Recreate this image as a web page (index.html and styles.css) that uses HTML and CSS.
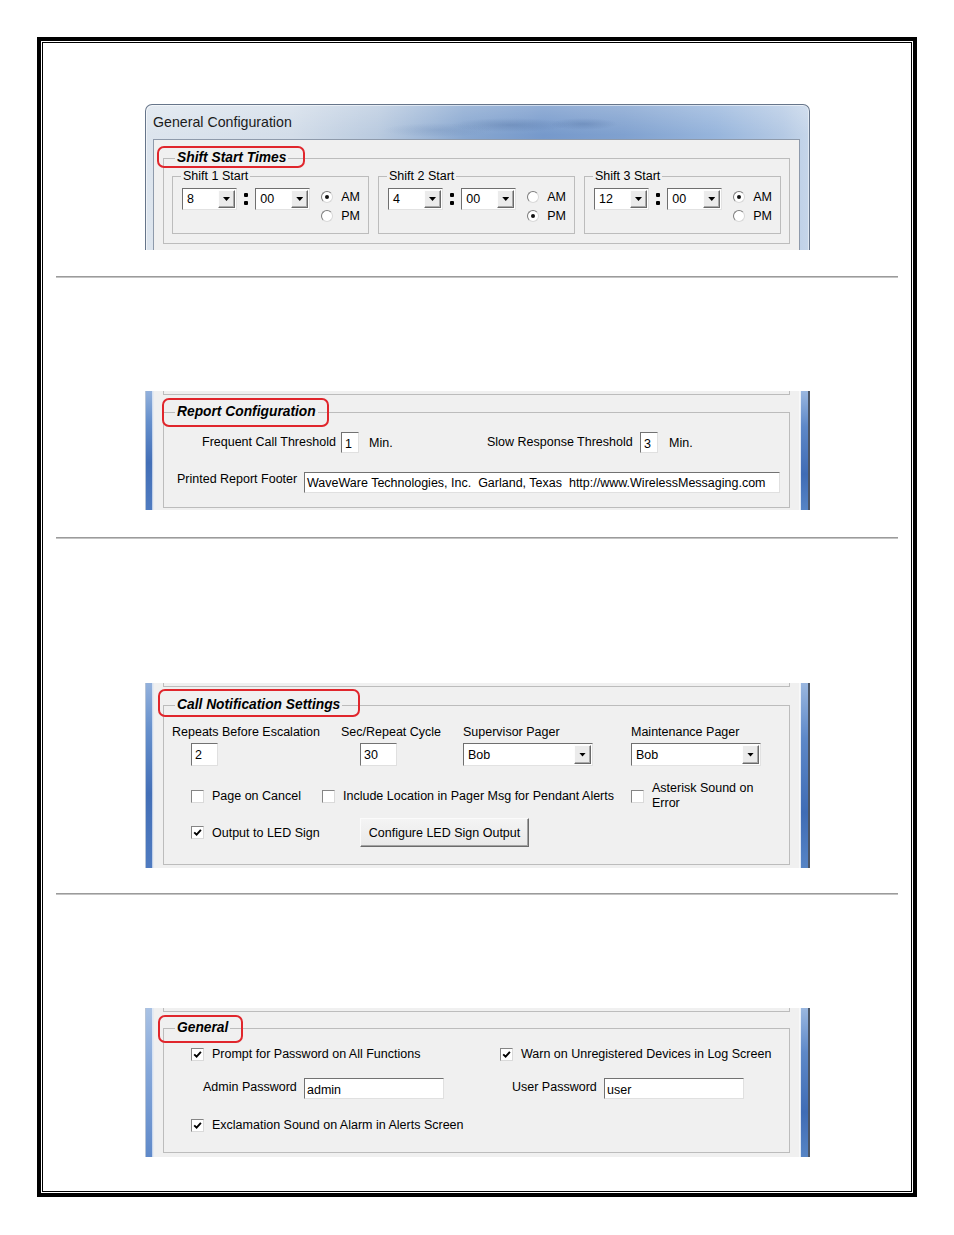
FILE: index.html
```html
<!DOCTYPE html>
<html>
<head>
<meta charset="utf-8">
<title>General Configuration</title>
<link rel="stylesheet" href="styles.css">
</head>
<body>
<div class="frame">
  <div class="inner">

    <div class="shot s1 win">
      <div class="titlebar">General Configuration</div>
      <div class="winbody">
        <div class="strip l"></div>
        <div class="client">
          <fieldset class="grp g1">
            <legend class="lg lg1">Shift Start Times</legend>
            <div class="shifts">
              <fieldset class="sub">
                <legend>Shift 1 Start</legend>
                <div class="shift-row">
                  <div class="combo combo-t"><span class="val">8</span><span class="dd"><i class="arr"></i></span></div>
                  <div class="colon"><i></i><i></i></div>
                  <div class="combo combo-t"><span class="val">00</span><span class="dd"><i class="arr"></i></span></div>
                  <div class="radios">
                    <div class="rrow"><span class="radio on"></span>AM</div>
                    <div class="rrow"><span class="radio"></span>PM</div>
                  </div>
                </div>
              </fieldset>
              <fieldset class="sub">
                <legend>Shift 2 Start</legend>
                <div class="shift-row">
                  <div class="combo combo-t"><span class="val">4</span><span class="dd"><i class="arr"></i></span></div>
                  <div class="colon"><i></i><i></i></div>
                  <div class="combo combo-t"><span class="val">00</span><span class="dd"><i class="arr"></i></span></div>
                  <div class="radios">
                    <div class="rrow"><span class="radio"></span>AM</div>
                    <div class="rrow"><span class="radio on"></span>PM</div>
                  </div>
                </div>
              </fieldset>
              <fieldset class="sub">
                <legend>Shift 3 Start</legend>
                <div class="shift-row">
                  <div class="combo combo-t"><span class="val">12</span><span class="dd"><i class="arr"></i></span></div>
                  <div class="colon"><i></i><i></i></div>
                  <div class="combo combo-t"><span class="val">00</span><span class="dd"><i class="arr"></i></span></div>
                  <div class="radios">
                    <div class="rrow"><span class="radio on"></span>AM</div>
                    <div class="rrow"><span class="radio"></span>PM</div>
                  </div>
                </div>
              </fieldset>
            </div>
          </fieldset>
        </div>
        <div class="strip r"></div>
      </div>
    </div>

    <div class="divider d1"></div>

    <div class="shot s2 crop">
      <div class="strip l"></div>
      <div class="client">
        <div class="stub"></div>
        <fieldset class="grp g2">
          <legend class="lg lg2">Report Configuration</legend>
          <div class="rc-row1">
            <div class="fld fld-a"><span class="lbl lbl-fc">Frequent Call Threshold</span><div class="tb tb-s">1</div><span class="unit">Min.</span></div>
            <div class="fld fld-b"><span class="lbl lbl-sr">Slow Response Threshold</span><div class="tb tb-s">3</div><span class="unit u2">Min.</span></div>
          </div>
          <div class="rc-row2">
            <span class="lbl lbl-pf">Printed Report Footer</span>
            <div class="tb tb-footer">WaveWare Technologies, Inc.  Garland, Texas  http://www.WirelessMessaging.com</div>
          </div>
        </fieldset>
      </div>
      <div class="strip r"></div>
    </div>

    <div class="divider d2"></div>

    <div class="shot s3 crop">
      <div class="strip l"></div>
      <div class="client">
        <div class="stub"></div>
        <fieldset class="grp g3">
          <legend class="lg lg3">Call Notification Settings</legend>
          <div class="cn-grid">
            <div class="lbl">Repeats Before Escalation</div>
            <div class="lbl">Sec/Repeat Cycle</div>
            <div class="lbl">Supervisor Pager</div>
            <div class="lbl">Maintenance Pager</div>
            <div class="cell"><div class="tb tb-rep">2</div></div>
            <div class="cell"><div class="tb tb-sec">30</div></div>
            <div class="cell"><div class="combo combo-w"><span class="val">Bob</span><span class="dd"><i class="arr"></i></span></div></div>
            <div class="cell"><div class="combo combo-w"><span class="val">Bob</span><span class="dd"><i class="arr"></i></span></div></div>
          </div>
          <div class="cn-checks">
            <div class="chk w131"><span class="cb"></span>Page on Cancel</div>
            <div class="chk w309"><span class="cb"></span>Include Location in Pager Msg for Pendant Alerts</div>
            <div class="chk chk2"><span class="cb"></span><span class="two">Asterisk Sound on<br>Error</span></div>
          </div>
          <div class="cn-led">
            <div class="chk w169"><span class="cb"><svg viewBox="0 0 9 9" width="9" height="9"><path d="M1.2 4.3 3.6 6.7 7.9 1.9" fill="none" stroke="#000" stroke-width="1.9"/></svg></span>Output to LED Sign</div>
            <div class="button">Configure LED Sign Output</div>
          </div>
        </fieldset>
      </div>
      <div class="strip r"></div>
    </div>

    <div class="divider d3"></div>

    <div class="shot s4 crop">
      <div class="strip l"></div>
      <div class="client">
        <div class="stub"></div>
        <fieldset class="grp g4">
          <legend class="lg lg4">General</legend>
          <div class="g4-row1">
            <div class="chk w309"><span class="cb"><svg viewBox="0 0 9 9" width="9" height="9"><path d="M1.2 4.3 3.6 6.7 7.9 1.9" fill="none" stroke="#000" stroke-width="1.9"/></svg></span>Prompt for Password on All Functions</div>
            <div class="chk"><span class="cb"><svg viewBox="0 0 9 9" width="9" height="9"><path d="M1.2 4.3 3.6 6.7 7.9 1.9" fill="none" stroke="#000" stroke-width="1.9"/></svg></span>Warn on Unregistered Devices in Log Screen</div>
          </div>
          <div class="g4-row2">
            <div class="pw w309"><span class="lbl lbl-ap">Admin Password</span><div class="tb tb-pw">admin</div></div>
            <div class="pw"><span class="lbl lbl-up">User Password</span><div class="tb tb-pw">user</div></div>
          </div>
          <div class="g4-row3">
            <div class="chk"><span class="cb"><svg viewBox="0 0 9 9" width="9" height="9"><path d="M1.2 4.3 3.6 6.7 7.9 1.9" fill="none" stroke="#000" stroke-width="1.9"/></svg></span>Exclamation Sound on Alarm in Alerts Screen</div>
          </div>
        </fieldset>
      </div>
      <div class="strip r"></div>
    </div>

  </div>
</div>
</body>
</html>
```

FILE: styles.css
```css
* { box-sizing: border-box; }
html, body { margin: 0; padding: 0; background: #fff; }
body {
  font-family: "Liberation Sans", Arial, sans-serif;
  font-size: 12.5px;
  color: #000;
}

/* page frame */
.frame {
  margin: 37px 0 0 37px;
  width: 880px;
  height: 1160px;
  border: 4px solid #000;
  padding: 1px;
}
.inner {
  height: 100%;
  border: 1px solid #000;
}

.shot { margin-left: 102px; width: 665px; overflow: hidden; }
.s1 { margin-top: 61px; height: 146px; }
.s2 { margin-top: 113px; height: 119px; }
.s3 { margin-top: 144px; height: 185px; }
.s4 { margin-top: 113px; height: 149px; }

.divider {
  margin-left: 13px;
  width: 842px;
  height: 2px;
  border-top: 1px solid #9b9b9b;
  border-bottom: 1px solid #c4c4c4;
}
.d1 { margin-top: 26px; }
.d2 { margin-top: 27px; }
.d3 { margin-top: 25px; }

/* window (first screenshot) */
.win {
  display: flex;
  flex-direction: column;
  border: 1px solid #66758a;
  border-bottom: 0;
  border-radius: 7px 7px 0 0;
  box-shadow: inset 1px 1px 0 rgba(255,255,255,.55), inset -1px 0 0 rgba(255,255,255,.45);
  background:
    radial-gradient(ellipse 60px 7px at 55% 20px, rgba(45,78,130,.22), rgba(45,78,130,0)),
    radial-gradient(ellipse 34px 6px at 66% 19px, rgba(45,78,130,.22), rgba(45,78,130,0)),
    radial-gradient(ellipse 55px 7px at 44% 25px, rgba(60,95,150,.15), rgba(60,95,150,0)),
    linear-gradient(180deg, rgba(255,255,255,.22) 0, rgba(255,255,255,0) 30px),
    linear-gradient(90deg, #dde5ee 0%, #d3dde9 22%, #b9cadf 35%, #88a7d0 48%, #7699cb 60%, #80a1cf 72%, #97b5dc 86%, #b4c9e4 96%, #c6d6ea 100%);
}
.titlebar {
  flex: none;
  height: 34px;
  padding-left: 7px;
  display: flex;
  align-items: center;
  font-size: 14.2px;
  color: #1b1b1b;
}
.winbody { flex: 1; display: flex; min-height: 0; }
.win .strip.l { width: 7px; flex: none; }
.win .strip.r { width: 9px; flex: none; }
.win .client {
  width: 647px;
  flex: none;
  border: 1px solid #8e9aab;
  border-bottom: 0;
  background: #f0f0f0;
  padding-top: 10px;
}

/* cropped screenshots */
.crop { display: flex; }
.crop .strip { flex: none; }
.crop .strip.l {
  width: 8px;
  background:
    linear-gradient(90deg, #b7c4d6 0, #b7c4d6 1px, rgba(0,0,0,0) 1px, rgba(0,0,0,0) 7px, rgba(255,255,255,.65) 7px),
    linear-gradient(180deg, #93b1dc 0%, #6690cc 25%, #436fb7 60%, #4f7bc0 100%);
}
.crop .strip.r {
  width: 10px;
  background:
    linear-gradient(90deg, rgba(255,255,255,.8) 0, rgba(255,255,255,.8) 1px, rgba(0,0,0,0) 1px, rgba(0,0,0,0) 8px, #4b5667 8px),
    linear-gradient(180deg, #9ab7e0 0%, #5d88c8 30%, #3f6cb5 70%, #5684c5 100%);
}
.s4 .strip.l {
  background:
    linear-gradient(90deg, #b7c4d6 0, #b7c4d6 1px, rgba(0,0,0,0) 1px, rgba(0,0,0,0) 7px, rgba(255,255,255,.65) 7px),
    linear-gradient(180deg, #a9c2e4 0%, #86a8da 40%, #5f89c9 100%);
}
.crop .client {
  width: 647px;
  flex: none;
  border-left: 1px solid #e6eaf0;
  border-right: 1px solid #f8f8f8;
  background: #f0f0f0;
}
.stub {
  margin: 0 9px;
  height: 4px;
  border: 1px solid #bcbcbc;
  border-top: 0;
}

/* group boxes */
fieldset.grp {
  margin: 0 9px;
  padding: 0 8px;
  border: 1px solid #bcbcbc;
  min-width: 0;
}
fieldset.grp > legend {
  position: relative;
  margin-left: 3px;
  padding: 0 2px;
  font: italic bold 13.8px/16px "Liberation Sans", Arial, sans-serif;
  color: #000;
  white-space: nowrap;
}
fieldset.grp > legend::before {
  content: "";
  position: absolute;
  border: 2px solid #e0262c;
  border-radius: 7px;
}
.lg1::before { left: -18px; right: -17px; top: -4px; bottom: -2px; }
.lg2::before { left: -13px; right: -11px; top: -6px; bottom: -7px; }
.lg3::before { left: -17px; right: -18px; top: -8px; bottom: -4px; }
.lg4::before { left: -17px; right: -13px; top: -5px; bottom: -7px; }

fieldset.g1 { padding-top: 3px; padding-bottom: 9px; }
fieldset.g2 { padding-top: 12px; padding-bottom: 14px; margin-top: 9px; }
fieldset.g3 { padding-top: 11px; padding-bottom: 17px; margin-top: 10px; }
fieldset.g4 { padding-top: 10px; padding-bottom: 19px; margin-top: 8px; }

.shifts { display: flex; gap: 9px; }
fieldset.sub {
  width: 197px;
  flex: none;
  margin: 0;
  padding: 0 8px 8px 8px;
  border: 1px solid #bcbcbc;
  min-width: 0;
}
fieldset.sub > legend {
  padding: 0 2px;
  font-size: 12.5px;
  line-height: 14px;
  white-space: nowrap;
}
.shift-row { margin-top: 4px; display: flex; align-items: flex-start; }
.shift-row > .combo:first-child { margin-left: 1px; }
.shift-row > .combo { margin-top: 1px; }

.colon {
  width: 20px;
  height: 22px;
  margin-top: 1px;
  display: flex;
  flex-direction: column;
  align-items: center;
  justify-content: center;
  gap: 4px;
}
.colon i { display: block; width: 4px; height: 4px; background: #000; border-radius: 1px; }

.radios { margin-left: 11px; }
.rrow { height: 19px; display: flex; align-items: center; gap: 8px; white-space: nowrap; }
.radio {
  width: 12px;
  height: 12px;
  flex: none;
  border-radius: 50%;
  border: 1px solid;
  border-color: #7c7c7c #d8d8d8 #d8d8d8 #7c7c7c;
  background: #fff;
  display: flex;
  align-items: center;
  justify-content: center;
}
.radio.on::after {
  content: "";
  width: 4px;
  height: 4px;
  border-radius: 50%;
  background: #111;
}

/* combo boxes */
.combo {
  display: flex;
  flex: none;
  border: 1px solid;
  border-color: #6f6f6f #e2e2e2 #e2e2e2 #6f6f6f;
  background: #fff;
  padding: 1px;
}
.combo-t { width: 55px; height: 22px; }
.combo-w { width: 130px; height: 23px; }
.combo .val { flex: 1; padding-left: 3px; display: flex; align-items: center; white-space: nowrap; }
.combo .dd {
  width: 17px;
  flex: none;
  background: #ebebeb;
  border: 1px solid;
  border-color: #fdfdfd #6a6a6a #6a6a6a #fdfdfd;
  box-shadow: inset -1px -1px 0 #a9a9a9;
  display: flex;
  align-items: center;
  justify-content: center;
}
.arr {
  display: block;
  width: 7px;
  height: 4px;
  background: #000;
  clip-path: polygon(0 0, 100% 0, 50% 100%);
}

/* text boxes */
.tb {
  flex: none;
  border: 1px solid;
  border-color: #727272 #e0e0e0 #e0e0e0 #727272;
  background: #fff;
  padding-left: 3px;
  display: flex;
  align-items: center;
  white-space: pre;
  overflow: hidden;
}
.tb-s { width: 18px; height: 21px; padding-top: 3px; }
.tb-footer { width: 476px; height: 21px; padding-left: 2px; padding-top: 1px; }
.tb-rep { width: 27px; height: 23px; margin-left: 19px; }
.tb-sec { width: 37px; height: 23px; margin-left: 19px; }
.tb-pw { width: 140px; height: 21px; padding-left: 2px; padding-top: 3px; }

.lbl { white-space: nowrap; line-height: 15px; }

/* report configuration */
.rc-row1 { display: flex; height: 21px; margin-left: 30px; }
.fld { display: flex; align-items: center; }
.fld-a { width: 285px; }
.lbl-fc { width: 139px; }
.lbl-sr { width: 153px; }
.unit { margin-left: 10px; }
.unit.u2 { margin-left: 11px; }
.rc-row2 { display: flex; margin-top: 19px; margin-left: 5px; height: 21px; align-items: flex-start; }
.lbl-pf { width: 127px; }

/* call notification */
.cn-grid {
  display: grid;
  grid-template-columns: 169px 122px 168px 1fr;
  grid-template-rows: 16px 23px;
  row-gap: 3px;
}
.cn-grid .lbl { line-height: 16px; }
.cell { display: flex; }
.cn-checks { display: flex; align-items: center; height: 30px; margin-top: 15px; margin-left: 19px; }
.cn-led { display: flex; align-items: center; height: 29px; margin-top: 7px; margin-left: 19px; }
.chk { display: flex; align-items: center; gap: 8px; white-space: nowrap; min-height: 16px; flex: none; }
.two { line-height: 15px; }
.w131 { width: 131px; }
.w169 { width: 169px; }
.w309 { width: 309px; }
.cb {
  width: 13px;
  height: 13px;
  flex: none;
  border: 1px solid;
  border-color: #858585 #dadada #dadada #858585;
  background: #fff;
  display: flex;
  align-items: center;
  justify-content: center;
}
.cb svg { display: block; }
.button {
  width: 169px;
  height: 29px;
  flex: none;
  border: 1px solid;
  border-color: #fbfbfb #6b6b6b #6b6b6b #fbfbfb;
  box-shadow: inset -1px -1px 0 #a3a3a3;
  background: linear-gradient(180deg, #f4f4f4, #e9e9e9);
  display: flex;
  align-items: center;
  justify-content: center;
  white-space: nowrap;
}

/* general */
.g4-row1 { display: flex; height: 16px; align-items: center; margin-left: 19px; }
.g4-row2 { display: flex; height: 21px; margin-top: 16px; margin-left: 31px; }
.pw { display: flex; align-items: flex-start; }
.lbl-ap { width: 101px; margin-top: 2px; }
.lbl-up { width: 92px; margin-top: 2px; }
.g4-row3 { display: flex; height: 16px; align-items: center; margin-top: 18px; margin-left: 19px; }
```
